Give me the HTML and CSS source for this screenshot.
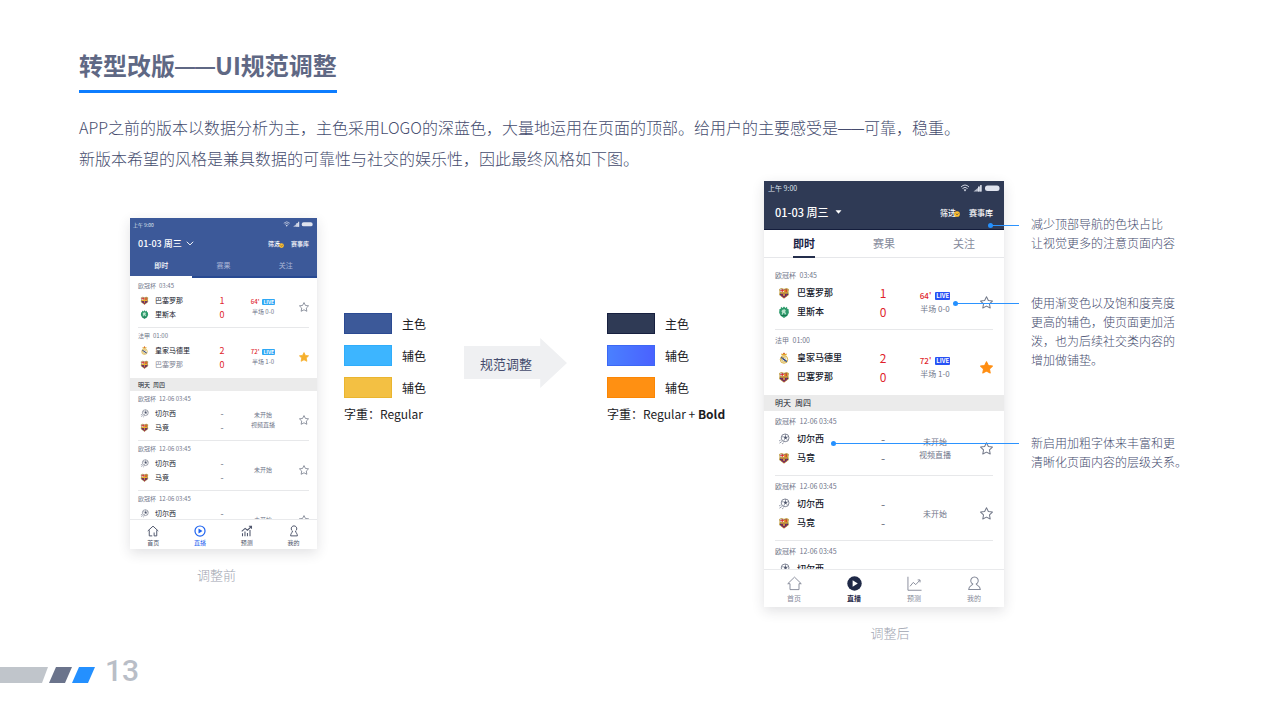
FILE: index.html
```html
<!DOCTYPE html>
<html lang="zh-CN">
<head>
<meta charset="utf-8">
<meta name="viewport" content="width=device-width, initial-scale=1">
<title>转型改版——UI规范调整</title>
<link rel="stylesheet" href="styles.css">
</head>
<body>
<svg class="defs" aria-hidden="true">
  <defs>
    <symbol id="star" viewBox="1 1 14 14"><path d="M8 1.800l2 4 4.400.6-3.200 3.100.8 4.500-4-2.100-4 2.100.8-4.500L1.600 6.400 6 5.800z" stroke-width="1.100" stroke-linejoin="round"/></symbol>
    <symbol id="barca" viewBox="0 0 16 16">
      <path d="M2 3l2.500-1L8 3l3.500-1L14 3l-.6 3.500.6 4L8 15 2 10.500l.6-4z" fill="#233a80" stroke="#d8a830" stroke-width="1"/>
      <path d="M3 2.800L8 3.500V7H3z" fill="#f3ead0"/><path d="M5 2.500h1.300V7H5zM3 4.200h5v1.200H3z" fill="#d8232e"/>
      <path d="M8 3.500l5-.7V7H8z" fill="#f4c430"/><path d="M9 3.300h1V7H9zM11 3h1v4h-1z" fill="#c8202f"/>
      <path d="M3 7h10v2H3z" fill="#e8b530"/>
      <path d="M4.500 9h1.500v4L4.500 12zM7.300 9h1.500v5.500H7.300zM10.200 9h1.500v3l-1.500 1z" fill="#c21f3c"/>
      <circle cx="8" cy="10.500" r="1.200" fill="#f2c53a"/>
    </symbol>
    <symbol id="sporting" viewBox="0 0 16 16">
      <path d="M4 1l2 1.500L8 .5l2 2L12 1l.5 3H14l.5 5-2 4L8 16l-4.500-3-2-4L2 4h1.500z" fill="#2d9a6b"/>
      <path d="M6 5l3-.8 1.500 2-1 1.500 1.500 3-2 .8-.6-2.300-1.600.3-.6 2.500-1.400-.8.8-3L4.500 7z" fill="#b9e3cc"/>
      <path d="M4 12.500h8" stroke="#116244" stroke-width="1"/>
    </symbol>
    <symbol id="madrid" viewBox="0 0 16 16">
      <path d="M5 4.500L4 2l2 .8L8 .5l2 2.300 2-.8-1 2.500z" fill="#e2a72c"/><circle cx="8" cy="1.800" r=".9" fill="#d32f3a"/>
      <circle cx="8" cy="10" r="5" fill="#fbf6df" stroke="#d6aa36" stroke-width="1.200"/>
      <path d="M4.300 7.300l7.400 5.400" stroke="#28468f" stroke-width="2"/>
      <path d="M10.500 8.500a3 3 0 1 0-.5 3.700" fill="none" stroke="#c79a28" stroke-width="1"/>
    </symbol>
    <symbol id="ball" viewBox="0 0 16 16">
      <circle cx="9.500" cy="6.500" r="5.200" fill="#fff" stroke="#5d6478" stroke-width="1"/>
      <path d="M8 5.200l2-1.200 2 1.500-.6 2.300-2.500.2z" fill="#4b5268"/>
      <path d="M10 4V1.500M12 5.500l2.500-.8M11.400 7.800l1.400 2M8.900 8l-1.300 2.600M8 5.200L4.800 5" stroke="#5d6478" stroke-width=".8"/>
      <path d="M1.500 10.500l2-1M2 13.500l3-2M5.500 14.500l2-1.500" stroke="#6d7488" stroke-width="1"/>
    </symbol>
    <symbol id="signals" viewBox="0 0 40 8">
      <g fill="none" stroke="currentColor" stroke-width=".9"><path d="M1 3q4-4 8 0M2.500 4.500q2.500-2.400 5 0"/></g>
      <path d="M5 7.500L3.700 5.700q1.300-1 2.600 0z" fill="currentColor"/>
      <path d="M13.500 7.500L21.500 1v6.500z" fill="currentColor" opacity=".75"/><path d="M18 7.500h1.400v-5H18zM20.200 7.500h1.300V1h-1.300z" fill="currentColor"/>
      <rect x="25" y="1.500" width="14.500" height="5.500" rx="2.500" fill="currentColor"/>
    </symbol>
    <symbol id="check-dot" viewBox="0 0 8 8"><circle cx="4" cy="4" r="3.800" class="dot-fill"/><path d="M2.200 3.300L4 5l2-1.700" fill="none" stroke="#43405a" stroke-width="1"/></symbol>
    <symbol id="person" viewBox="0 0 16 16"><g fill="none" stroke="currentColor" stroke-width="1.100" stroke-linejoin="round"><path d="M6.200 8.600a4 4 0 1 1 3.600 0c0 1.200 4.400 1.600 4.400 5.900H1.800c0-4.300 4.400-4.700 4.400-5.900z"/></g></symbol>
    <symbol id="pawn" viewBox="0 0 16 16"><path d="M6 8a3.700 3.700 0 1 1 4 0c.3 2.500 2.500 3 2.500 6.500h-9C3.500 11 5.700 10.500 6 8z" fill="none" stroke="currentColor" stroke-width="1.300" stroke-linejoin="round"/></symbol>
    <symbol id="home" viewBox="0 0 16 16"><path d="M.8 8.200L8 1.200l7.200 7h-2.400v6.300H3.200V8.200z" fill="none" stroke="currentColor" stroke-width="1" stroke-linejoin="round"/></symbol>
    <symbol id="home-door" viewBox="0 0 16 16"><path d="M1 8l7-6.500L15 8M3 7v7.500h4M13 7v7.500H9.500V10" fill="none" stroke="currentColor" stroke-width="1.300"/></symbol>
    <symbol id="play-ring" viewBox="0 0 16 16"><circle cx="8" cy="8" r="6.700" fill="none" stroke="currentColor" stroke-width="1.600"/><path d="M6 4.800L11.300 8 6 11.200z" fill="currentColor"/></symbol>
    <symbol id="play-disc" viewBox="0 0 16 16"><circle cx="8" cy="8" r="7.700" fill="currentColor"/><path d="M6 4.500L11.500 8 6 11.500z" fill="#fff"/></symbol>
    <symbol id="bars" viewBox="0 0 16 16"><path d="M2 15v-4M5.300 15V8.500M8.600 15v-4.500M12 15V6.500M1 8.500l4.500-4 3 2.500 5.500-5M10.500 1.700H14V5" fill="none" stroke="currentColor" stroke-width="1.400"/></symbol>
    <symbol id="trend" viewBox="0 0 16 16"><path d="M1 .8v14.400h14.500M3.200 11l3.500-4.200 2.600 2.400 4.400-4.700M11.400 4.200h2.500v2.600" fill="none" stroke="currentColor" stroke-width="1"/></symbol>
  </defs>
</svg>

<header class="intro">
  <h1 class="title">转型改版<span class="dash">——</span>UI规范调整</h1>
  <p class="lead">APP之前的版本以数据分析为主，主色采用LOGO的深蓝色，大量地运用在页面的顶部。给用户的主要感受是<span class="dash">——</span>可靠，稳重。<br>新版本希望的风格是兼具数据的可靠性与社交的娱乐性，因此最终风格如下图。</p>
</header>

<main class="stage">
  <figure class="shot shot-before">
    <div class="phone before">
      <div class="top">
        <div class="status"><span>上午 9:00</span><svg class="signals"><use href="#signals"/></svg></div>
        <div class="bar">
          <button class="date">01-03 周三<svg class="caret" viewBox="0 0 10 6"><path d="M1 .8l4 4 4-4" fill="none" stroke="currentColor" stroke-width="1.200"/></svg></button>
          <button class="tool filter">筛选<svg class="check"><use href="#check-dot"/></svg></button>
          <button class="tool">赛事库</button>
        </div>
      </div>
      <div class="tabs"><button class="tab on"><span>即时</span></button><button class="tab"><span>赛果</span></button><button class="tab"><span>关注</span></button></div>
      <div class="list">
        <article class="match">
          <p class="league">欧冠杯&ensp;03:45</p>
          <ul class="teams">
            <li><svg class="crest"><use href="#barca"/></svg><span class="name">巴塞罗那</span><b class="score">1</b></li>
            <li><svg class="crest"><use href="#sporting"/></svg><span class="name">里斯本</span><b class="score">0</b></li>
          </ul>
          <div class="state"><p><b class="minute">64'</b><span class="live">LIVE</span></p><p>半场 0-0</p></div>
          <button class="fav" aria-label="关注"><svg><use href="#star"/></svg></button>
        </article>
        <article class="match">
          <p class="league">法甲&ensp;01:00</p>
          <ul class="teams">
            <li><svg class="crest"><use href="#madrid"/></svg><span class="name">皇家马德里</span><b class="score">2</b></li>
            <li><svg class="crest"><use href="#barca"/></svg><span class="name muted">巴塞罗那</span><b class="score">0</b></li>
          </ul>
          <div class="state"><p><b class="minute">72'</b><span class="live">LIVE</span></p><p>半场 1-0</p></div>
          <button class="fav on" aria-label="已关注"><svg><use href="#star"/></svg></button>
        </article>
        <h2 class="day">明天&ensp;周四</h2>
        <article class="match">
          <p class="league">欧冠杯&ensp;12-06 03:45</p>
          <ul class="teams">
            <li><svg class="crest"><use href="#ball"/></svg><span class="name">切尔西</span><span class="score none">-</span></li>
            <li><svg class="crest"><use href="#barca"/></svg><span class="name">马竞</span><span class="score none">-</span></li>
          </ul>
          <div class="state"><p>未开始</p><p>视频直播</p></div>
          <button class="fav" aria-label="关注"><svg><use href="#star"/></svg></button>
        </article>
        <article class="match">
          <p class="league">欧冠杯&ensp;12-06 03:45</p>
          <ul class="teams">
            <li><svg class="crest"><use href="#ball"/></svg><span class="name">切尔西</span><span class="score none">-</span></li>
            <li><svg class="crest"><use href="#barca"/></svg><span class="name">马竞</span><span class="score none">-</span></li>
          </ul>
          <div class="state"><p>未开始</p></div>
          <button class="fav" aria-label="关注"><svg><use href="#star"/></svg></button>
        </article>
        <article class="match">
          <p class="league">欧冠杯&ensp;12-06 03:45</p>
          <ul class="teams">
            <li><svg class="crest"><use href="#ball"/></svg><span class="name">切尔西</span><span class="score none">-</span></li>
            <li></li>
          </ul>
          <div class="state"><p>未开始</p></div>
          <button class="fav" aria-label="关注"><svg><use href="#star"/></svg></button>
        </article>
      </div>
      <nav class="nav">
        <a href="#"><svg><use href="#home-door"/></svg>首页</a>
        <a href="#" class="on"><svg><use href="#play-ring"/></svg>直播</a>
        <a href="#"><svg><use href="#bars"/></svg>预测</a>
        <a href="#"><svg><use href="#pawn"/></svg>我的</a>
      </nav>
    </div>
    <figcaption class="caption">调整前</figcaption>
  </figure>

  <section class="palette palette-before">
    <ul class="swatches">
      <li><i class="chip navy"></i>主色</li>
      <li><i class="chip sky"></i>辅色</li>
      <li><i class="chip amber"></i>辅色</li>
    </ul>
    <p class="weight">字重：Regular</p>
  </section>

  <div class="arrow"><span>规范调整</span></div>

  <section class="palette palette-after">
    <ul class="swatches">
      <li><i class="chip ink"></i>主色</li>
      <li><i class="chip violet"></i>辅色</li>
      <li><i class="chip orange"></i>辅色</li>
    </ul>
    <p class="weight">字重：Regular + <b>Bold</b></p>
  </section>

  <figure class="shot shot-after">
    <div class="phone after">
      <div class="top">
        <div class="status"><span>上午 9:00</span><svg class="signals"><use href="#signals"/></svg></div>
        <div class="bar">
          <button class="date">01-03 周三<svg class="caret" viewBox="0 0 10 6"><path d="M.5.500h9L5 5.500z" fill="currentColor"/></svg></button>
          <button class="tool filter">筛选<svg class="check"><use href="#check-dot"/></svg></button>
          <button class="tool">赛事库</button>
        </div>
      </div>
      <div class="tabs"><button class="tab on"><span>即时</span></button><button class="tab"><span>赛果</span></button><button class="tab"><span>关注</span></button></div>
      <div class="list">
        <article class="match">
          <p class="league">欧冠杯&ensp;03:45</p>
          <ul class="teams">
            <li><svg class="crest"><use href="#barca"/></svg><span class="name">巴塞罗那</span><b class="score">1</b></li>
            <li><svg class="crest"><use href="#sporting"/></svg><span class="name">里斯本</span><b class="score">0</b></li>
          </ul>
          <div class="state"><p><b class="minute">64'</b><span class="live">LIVE</span></p><p>半场 0-0</p></div>
          <button class="fav" aria-label="关注"><svg><use href="#star"/></svg></button>
        </article>
        <article class="match">
          <p class="league">法甲&ensp;01:00</p>
          <ul class="teams">
            <li><svg class="crest"><use href="#madrid"/></svg><span class="name">皇家马德里</span><b class="score">2</b></li>
            <li><svg class="crest"><use href="#barca"/></svg><span class="name">巴塞罗那</span><b class="score">0</b></li>
          </ul>
          <div class="state"><p><b class="minute">72'</b><span class="live">LIVE</span></p><p>半场 1-0</p></div>
          <button class="fav on" aria-label="已关注"><svg><use href="#star"/></svg></button>
        </article>
        <h2 class="day">明天&ensp;周四</h2>
        <article class="match">
          <p class="league">欧冠杯&ensp;12-06 03:45</p>
          <ul class="teams">
            <li><svg class="crest"><use href="#ball"/></svg><span class="name">切尔西</span><span class="score none">-</span></li>
            <li><svg class="crest"><use href="#barca"/></svg><span class="name">马竞</span><span class="score none">-</span></li>
          </ul>
          <div class="state"><p>未开始</p><p>视频直播</p></div>
          <button class="fav" aria-label="关注"><svg><use href="#star"/></svg></button>
        </article>
        <article class="match">
          <p class="league">欧冠杯&ensp;12-06 03:45</p>
          <ul class="teams">
            <li><svg class="crest"><use href="#ball"/></svg><span class="name">切尔西</span><span class="score none">-</span></li>
            <li><svg class="crest"><use href="#barca"/></svg><span class="name">马竞</span><span class="score none">-</span></li>
          </ul>
          <div class="state"><p>未开始</p></div>
          <button class="fav" aria-label="关注"><svg><use href="#star"/></svg></button>
        </article>
        <article class="match">
          <p class="league">欧冠杯&ensp;12-06 03:45</p>
          <ul class="teams">
            <li><svg class="crest"><use href="#ball"/></svg><span class="name">切尔西</span><span class="score none">-</span></li>
          </ul>
        </article>
      </div>
      <nav class="nav">
        <a href="#"><svg><use href="#home"/></svg>首页</a>
        <a href="#" class="on"><svg><use href="#play-disc"/></svg>直播</a>
        <a href="#"><svg><use href="#trend"/></svg>预测</a>
        <a href="#"><svg><use href="#person"/></svg>我的</a>
      </nav>
      <i class="callout to-header"></i>
      <i class="callout to-live"></i>
      <i class="callout to-team"></i>
    </div>
    <figcaption class="caption">调整后</figcaption>
  </figure>

  <aside class="notes">
    <p class="note">减少顶部导航的色块占比<br>让视觉更多的注意页面内容</p>
    <p class="note">使用渐变色以及饱和度亮度<br>更高的辅色，使页面更加活<br>泼，也为后续社交类内容的<br>增加做铺垫。</p>
    <p class="note">新启用加粗字体来丰富和更<br>清晰化页面内容的层级关系。</p>
  </aside>
</main>

<footer class="footer">
  <svg class="stripes" viewBox="0 0 95 16" aria-hidden="true"><path d="M0 0h48l-6 16H0z" fill="#c0c5cb"/><path d="M56 0h16l-7 16H49z" fill="#6b748c"/><path d="M79 0h16l-7 16H72z" fill="#2490ff"/></svg>
  <span class="page-no">13</span>
</footer>
</body>
</html>
```
FILE: styles.css
```css
* { box-sizing: border-box; }

body {
  margin: 0;
  min-height: 100vh;
  display: flex;
  flex-direction: column;
  background: #fff;
  color: #454c6e;
  font-family: "Noto Sans CJK SC", "Noto Sans", sans-serif;
}

h1, h2, p, ul, figure { margin: 0; padding: 0; }
ul { list-style: none; }
button { margin: 0; padding: 0; border: 0; background: none; font: inherit; color: inherit; }
a { color: inherit; text-decoration: none; }
svg { display: block; }
.defs { position: absolute; width: 0; height: 0; }

/* Heading */
.intro { padding: 48px 79px 0; }
.title {
  width: fit-content;
  padding-bottom: 8px;
  border-bottom: 3px solid #0d7dff;
  font-size: 24px;
  line-height: 34px;
  font-weight: 700;
  color: #5f6884;
}
.dash { font-family: "Liberation Sans", sans-serif; font-size: 13px; line-height: 1; vertical-align: 1px; }
.title .dash { font-size: 20px; vertical-align: 2px; }
.lead {
  margin-top: 19px;
  font-size: 16px;
  line-height: 31px;
  font-weight: 300;
}

/* Stage */
.stage {
  margin-top: 7px;
  display: grid;
  grid-template-columns:
    minmax(0, 130fr) minmax(0, 187fr) minmax(0, 27fr) minmax(0, 120fr)
    minmax(0, 103fr) minmax(0, 40fr) minmax(0, 157fr) minmax(0, 240fr)
    minmax(0, 27fr) minmax(0, 249fr);
  align-items: start;
}
.shot-before { grid-column: 2; margin-top: 37px; }
.palette-before { grid-column: 4; }
.arrow { grid-column: 5; }
.palette-after { grid-column: 7; }
.shot-after { grid-column: 8; }
.notes { grid-column: 10; }

.caption {
  margin-top: 16px;
  padding-right: 14px;
  text-align: center;
  font-size: 13px;
  line-height: 20px;
  font-weight: 300;
  color: #a0a4b0;
}
.shot-after .caption { padding-right: 0; padding-left: 12px; }

/* Palettes */
.palette { margin-top: 132px; color: #1c1c1f; font-size: 12px; white-space: nowrap; }
.swatches { display: grid; gap: 11px; }
.swatches li { display: flex; align-items: center; gap: 10px; line-height: 21px; }
.chip { width: 48px; height: 21px; border: 1px solid transparent; }
.navy { background: #3c5999; border-color: #2b4a92; }
.sky { background: #3db5ff; border-color: #2fadfb; }
.amber { background: #f3c043; border-color: #eab52f; }
.ink { background: #2f3a55; border-color: #17203f; }
.violet { background: linear-gradient(90deg, #4a80ff, #4a62ff); border-color: #3c68f5; }
.orange { background: #ff9012; border-color: #fb8604; }
.weight { margin-top: 6px; line-height: 20px; }

.arrow {
  margin-top: 157px;
  height: 50px;
  padding-right: 19px;
  display: grid;
  place-items: center;
  background: #eff0f2;
  clip-path: polygon(0 16%, 74% 16%, 74% 0, 100% 50%, 74% 100%, 74% 82%, 0 82%);
  font-size: 13px;
  white-space: nowrap;
}

/* Notes */
.notes { margin-top: 33px; font-size: 12px; line-height: 19px; font-weight: 300; white-space: nowrap; }
.note:nth-child(2) { margin-top: 41px; }
.note:nth-child(3) { margin-top: 64px; }

/* Phone */
.phone {
  position: relative;
  background: #fff;
  box-shadow: 0 4px 12px rgba(40, 45, 60, .14);
  color: #14182a;
}
.before {
  --pad: 8px; --tiny: 5px; --small: 6px; --team: 7px; --big: 9px;
  --team-h: 14px; --crest: 9px; --star: 10px; --state-h: 10px;
}
.after {
  --pad: 11px; --tiny: 7px; --small: 8px; --team: 9px; --big: 12px;
  --team-h: 19px; --crest: 12px; --star: 13px; --state-h: 13px;
}

.top { color: #fff; background: #3c5999; }
.after .top { background: #2f3a55; border-bottom: 1px solid #141d3c; }
.status {
  height: 12px;
  padding: 0 3px;
  display: flex;
  align-items: center;
  justify-content: space-between;
  font-size: var(--tiny);
  color: #dfe3ee;
}
.after .status { height: 14px; padding: 0 4px; }
.signals { width: 32px; height: 6px; }
.after .signals { width: 40px; height: 8px; }
.bar { height: 26px; padding: 0 var(--pad); display: flex; align-items: center; }
.after .bar { height: 34px; }
.date { margin-right: auto; display: flex; align-items: center; gap: 4px; font-size: 9px; font-weight: 500; }
.caret { width: 8px; height: 5px; }
.after .date { gap: 7px; font-size: 11px; }
.after .caret { width: 7px; height: 4px; }
.tool { position: relative; margin-left: 11px; font-size: var(--small); font-weight: 500; }
.after .tool { margin-left: 13px; }
.check { position: absolute; right: -4px; bottom: 0; width: 5px; height: 5px; }
.after .check { width: 6px; height: 6px; bottom: 1px; }
.dot-fill { fill: #ffc02c; }
.after .dot-fill { fill: #ff9a1e; }

.tabs { display: grid; grid-template-columns: repeat(3, 1fr); height: 22px; background: #3c5999; color: #a9b6d6; font-size: var(--team); }
.tab { padding-bottom: 2px; border-bottom: 2px solid #284a92; }
.tab.on { color: #fff; font-weight: 500; border-color: #fff; border-top: 0; }
.after .tabs { height: 28px; background: #fff; color: #858a9b; font-size: 11px; border-bottom: 1px solid #e6e7ea; }
.after .tab { padding: 0; border: 0; }
.after .tab.on { color: #1b2445; font-weight: 700; }
.after .tab span { display: inline-block; line-height: 26px; border-bottom: 2px solid transparent; }
.after .tab.on span { border-color: #242e4c; }

.list { height: 241px; overflow: hidden; }
.after .list { height: 311px; padding-top: 7px; }

.match {
  margin: 0 var(--pad);
  padding: 1px 0 6px;
  border-bottom: 1px solid #e7e8ea;
  display: grid;
  grid-template-columns: 1fr 66px 13px;
  align-items: center;
}
.after .match { padding: 2px 0 8px; grid-template-columns: 1fr 84px 16px; }
.match:has(+ .day) { border-color: transparent; }
.league { grid-column: 1 / -1; font-size: var(--small); line-height: 14px; color: #70768a; }
.after .league { font-size: 7px; line-height: 16px; }
.teams li { height: var(--team-h); display: flex; align-items: center; padding-left: 2px; }
.after .teams li { padding-left: 3px; }
.crest { width: var(--crest); height: var(--crest); }
.name { margin-left: 6px; margin-right: auto; font-size: var(--team); }
.after .name { margin-left: 7px; font-weight: 500; }
.muted { color: #7e8392; }
.score { width: 16px; text-align: center; font-size: var(--big); font-weight: 400; color: #e01f2d; }
.after .score { width: 20px; }
.score.none { color: #6b7080; }
.state { text-align: center; font-size: var(--small); line-height: var(--state-h); color: #70768a; }
.state p { display: flex; align-items: center; justify-content: center; gap: 3px; }
.after .state p { gap: 4px; }
.minute { color: #e01f2d; font-weight: 500; }
.live { padding: 0 1px; border-radius: 1px; background: #2fa8f5; color: #fff; font-size: 5px; line-height: 6px; font-weight: 700; }
.after .live { padding: 0 1px; background: #2752f5; font-size: 6px; line-height: 8px; }
.fav { justify-self: end; }
.fav svg { width: var(--star); height: var(--star); fill: none; stroke: #747a8a; }
.fav.on svg { fill: #f6b02c; stroke: #f6b02c; }
.after .fav.on svg { fill: #ff8e12; stroke: #ff8e12; }

.day { padding: 0 var(--pad); background: #ebebeb; font-size: var(--small); line-height: 13px; font-weight: 400; }
.after .day { line-height: 16px; }

.nav {
  height: 30px;
  padding-top: 5px;
  display: grid;
  grid-template-columns: repeat(4, 1fr);
  border-top: 1px solid #e9eaec;
  font-size: var(--small);
  line-height: 9px;
  color: #4f566c;
}
.nav a { display: grid; justify-items: center; align-content: start; gap: 1px; }
.nav svg { width: 12px; height: 12px; }
.nav .on { color: #1c62f0; }
.after .nav { height: 38px; padding-top: 6px; font-size: 7px; line-height: 10px; color: #858a99; }
.after .nav a { gap: 2px; }
.after .nav svg { width: 15px; height: 15px; }
.after .nav .on { color: #1f2947; font-weight: 700; }

/* Pointers from the phone to the notes */
.callout { position: absolute; right: -15px; height: 1px; background: #2b93ff; }
.callout::before { content: ""; position: absolute; left: -3px; top: -2px; width: 5px; height: 5px; border-radius: 50%; background: #2490ff; }
.to-header { left: 227px; top: 44px; }
.to-live { left: 192px; top: 122px; }
.to-team { left: 70px; top: 262px; }

/* Footer */
.footer { margin-top: auto; padding-bottom: 33px; display: flex; align-items: center; gap: 10px; }
.stripes { width: 95px; height: 16px; margin-top: 8px; }
.page-no { font-family: Roboto, sans-serif; font-size: 30px; line-height: 32px; font-weight: 500; color: #b9bec7; }
```
